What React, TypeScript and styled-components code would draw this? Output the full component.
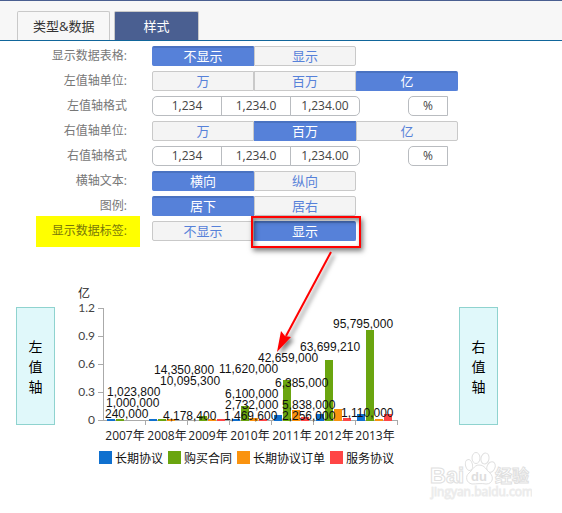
import React, { useState } from "react";
import styled, { createGlobalStyle } from "styled-components";

const sans = `"Open Sans", "Noto Sans CJK SC", sans-serif`;
const cjk = `"Noto Sans CJK SC", sans-serif`;

const GlobalStyle = createGlobalStyle`
  *, *::before, *::after { box-sizing: border-box; }
  body { margin: 0; background: #fff; font-family: ${sans}; }
  button { font-family: inherit; margin: 0; padding: 0; cursor: pointer; white-space: nowrap; }
`;

const Page = styled.div`
  position: relative;
  min-height: 100vh;
  overflow: hidden;
`;

const TabBar = styled.nav`
  display: flex;
  align-items: flex-end;
  gap: 4px;
  height: 41px;
  padding-left: 17px;
  background: #f7f7f7;
  border-top: 1px solid #4a5f91;
  border-bottom: 1px solid #11669b;
`;

const Tab = styled.button<{ $active: boolean }>`
  height: 29px;
  padding: 0 ${(p) => (p.$active ? 28 : 15)}px;
  border: 1px solid #c9c9c9;
  border-bottom: 0;
  border-radius: 2px 2px 0 0;
  background: ${(p) => (p.$active ? "#4a5f91" : "#f7f7f7")};
  color: ${(p) => (p.$active ? "#fff" : "#333")};
  font-size: 13px;
  line-height: 28px;
`;

const Form = styled.div`
  display: flex;
  flex-direction: column;
  gap: 5px;
  padding-top: 5px;
`;

const Row = styled.div`
  display: flex;
  align-items: center;
  gap: 25px;
  height: 20px;
`;

const Label = styled.span<{ $marked?: boolean }>`
  position: relative;
  z-index: 0;
  flex: none;
  width: 127px;
  text-align: right;
  color: ${(p) => (p.$marked ? "#77770a" : "#777")};
  font-family: ${sans};
  font-size: 12px;
  line-height: 20px;

  &::before {
    content: "";
    display: ${(p) => (p.$marked ? "block" : "none")};
    position: absolute;
    z-index: -1;
    inset: -5px -13px -6px 36px;
    background: #ff0;
  }
`;

const Group = styled.div`
  display: flex;
`;

const Segment = styled.button<{ $active: boolean }>`
  width: 102px;
  height: 20px;
  border: 1px solid ${(p) => (p.$active ? "#5681d9" : "#c9c9c9")};
  border-top-color: ${(p) => (p.$active ? "#4a72c0" : "#c9c9c9")};
  box-shadow: ${(p) => (p.$active ? "inset 0 1px 0 #4a72c0" : "none")};
  background: ${(p) => (p.$active ? "#5681d9" : "#f4f4f4")};
  color: ${(p) => (p.$active ? "#fff" : "#5681d9")};
  font-size: 13px;
  line-height: 16px;

  &:first-child { border-radius: 2px 0 0 2px; }
  &:last-of-type { border-radius: 0 2px 2px 0; }
`;

const FormatGroup = styled.div`
  display: flex;
  gap: 48px;
`;

const FormatButton = styled.button`
  width: 70px;
  height: 20px;
  border: 1px solid #b9bcc0;
  background: #fff;
  color: #444;
  font-size: 12px;
  line-height: 18px;

  & + & { margin-left: -1px; }
  &:first-child { border-radius: 5px 0 0 5px; }
  &:last-child { border-radius: 0 5px 5px 0; }
`;

const PercentButton = styled(FormatButton)`
  width: 40px;
  &:first-child, &:last-child { border-radius: 5px 0 0 5px; }
`;

const Callout = styled.div`
  position: relative;
  display: flex;
`;

const CalloutBox = styled.div`
  position: absolute;
  inset: -5px -5px -7px 99px;
  border: 2px solid #f00;
  box-shadow: 2px 3px 5px rgba(0, 0, 0, 0.5), inset 2px 3px 5px rgba(0, 0, 0, 0.45);
  pointer-events: none;
`;

const CalloutArrow = styled.svg`
  position: absolute;
  left: 118px;
  top: 27px;
  z-index: 2;
  pointer-events: none;
`;

const ChartArea = styled.section`
  display: flex;
  align-items: flex-start;
  margin-top: 40px;
  padding-left: 16px;
`;

const AxisCard = styled.div`
  display: flex;
  flex-direction: column;
  align-items: center;
  justify-content: center;
  flex: none;
  width: 39px;
  height: 118px;
  margin-top: 26px;
  border: 1px solid #8fd3cf;
  background: #e0f8fa;
  color: #000;
  font-family: ${cjk};
  font-size: 14px;
  line-height: 20px;
`;

const Figure = styled.figure`
  flex: none;
  margin: 0;
`;

const Plot = styled.svg`
  display: block;
`;

const AxisText = styled.text`
  font-family: Lato, sans-serif;
  font-size: 12px;
  fill: #444;
`;

const YearText = styled.text`
  font-family: ${sans};
  font-size: 12px;
  fill: #222;
`;

const ValueText = styled.text`
  font-family: "Liberation Sans", sans-serif;
  font-size: 12px;
  fill: #111;
`;

const Legend = styled.figcaption`
  display: flex;
  gap: 5px;
  margin-top: 6px;
  padding-left: 44px;
`;

const LegendItem = styled.span`
  display: flex;
  align-items: center;
  gap: 3px;
  height: 13px;
  color: #111;
  font-family: ${cjk};
  font-size: 12px;
  line-height: 13px;
`;

const Swatch = styled.i<{ $color: string }>`
  width: 13px;
  height: 13px;
  background: ${(p) => p.$color};
`;

const Watermark = styled.svg`
  position: absolute;
  right: 30px;
  bottom: 11px;
`;

type Choice = { label: string; options: string[]; initial: number; marked?: boolean };
type FormatRow = { label: string; format: true };

const rows: (Choice | FormatRow)[] = [
  { label: "显示数据表格:", options: ["不显示", "显示"], initial: 0 },
  { label: "左值轴单位:", options: ["万", "百万", "亿"], initial: 2 },
  { label: "左值轴格式", format: true },
  { label: "右值轴单位:", options: ["万", "百万", "亿"], initial: 1 },
  { label: "右值轴格式", format: true },
  { label: "横轴文本:", options: ["横向", "纵向"], initial: 0 },
  { label: "图例:", options: ["居下", "居右"], initial: 0 },
  { label: "显示数据标签:", options: ["不显示", "显示"], initial: 1, marked: true },
];

const colors = ["#0f70cf", "#6aa50f", "#fa930f", "#ff4545"];
const series = ["长期协议", "购买合同", "长期协议订单", "服务协议"];

// Bar heights in pixels, one list per year, in series order.
const years: { year: number; bars: number[] }[] = [
  { year: 2007, bars: [1, 1, 0, 0] },
  { year: 2008, bars: [1, 1, 1, 0] },
  { year: 2009, bars: [0, 4, 1, 1] },
  { year: 2010, bars: [1, 14, 2, 1] },
  { year: 2011, bars: [5, 40, 10, 3] },
  { year: 2012, bars: [6, 60, 11, 2] },
  { year: 2013, bars: [6, 90, 1, 6] },
];

const values: [string, number, number][] = [
  ["1,023,800", 107, 396],
  ["1,000,000", 106, 407],
  ["240,000", 105, 418],
  ["14,350,800", 154, 374],
  ["10,095,300", 160, 385],
  ["4,178,400", 163, 420],
  ["11,620,000", 219, 373],
  ["6,100,000", 225, 398],
  ["2,732,000", 225, 409],
  ["1,469,600", 224, 420],
  ["42,659,000", 258, 362],
  ["6,385,000", 275, 387],
  ["5,838,000", 282, 409],
  ["2,256,000", 282, 420],
  ["63,699,210", 300, 351],
  ["95,795,000", 333, 328],
  ["1,110,000", 341, 417],
];

function ChoiceRow({ label, options, initial, marked }: Choice) {
  const [selected, setSelected] = useState(initial);
  const id = `label-${label}`;
  const segments = options.map((option, i) => (
    <Segment
      key={option}
      type="button"
      $active={i === selected}
      aria-pressed={i === selected}
      onClick={() => setSelected(i)}
    >
      {option}
    </Segment>
  ));
  return (
    <Row>
      <Label id={id} $marked={marked}>{label}</Label>
      {marked ? (
        <Callout role="group" aria-labelledby={id}>
          {segments}
          <CalloutBox />
          <Arrow />
        </Callout>
      ) : (
        <Group role="group" aria-labelledby={id}>{segments}</Group>
      )}
    </Row>
  );
}

function FormatChoice({ label }: { label: string }) {
  const id = `label-${label}`;
  return (
    <Row>
      <Label id={id}>{label}</Label>
      <FormatGroup role="group" aria-labelledby={id}>
        <Group>
          <FormatButton type="button">1,234</FormatButton>
          <FormatButton type="button">1,234.0</FormatButton>
          <FormatButton type="button">1,234.00</FormatButton>
        </Group>
        <Group>
          <PercentButton type="button">%</PercentButton>
        </Group>
      </FormatGroup>
    </Row>
  );
}

function Arrow() {
  return (
    <CalloutArrow width="80" height="112" viewBox="270 248 80 112" aria-hidden="true">
      <defs>
        <filter id="soft" x="-30%" y="-30%" width="170%" height="170%">
          <feDropShadow dx="3" dy="3" stdDeviation="2" floodColor="#000" floodOpacity="0.5" />
        </filter>
      </defs>
      <g filter="url(#soft)">
        <path d="M331 252 L286 336" stroke="#f00" strokeWidth="2" />
        <path d="M277 352 L281 331 L285 336 L291 337 Z" fill="#f00" />
      </g>
    </CalloutArrow>
  );
}

function Chart() {
  return (
    <Figure>
      <Plot width="404" height="164" viewBox="55 281 404 164" role="img" aria-label="2007年至2013年">
        <YearText x="78" y="298">亿</YearText>
        {["1.2", "0.9", "0.6", "0.3", "0"].map((tick, i) => (
          <g key={tick}>
            <AxisText x="95" y={312 + i * 28} textAnchor="end">{tick}</AxisText>
            <rect x="98" y={308 + i * 28} width="5" height="1" fill="#aaa" />
          </g>
        ))}
        <rect x="103" y="308" width="1" height="113" fill="#aaa" />
        <rect x="103" y="420" width="294" height="1" fill="#aaa" />
        {years.map(({ year, bars }, i) => (
          <g key={year}>
            <rect x={Math.round(145.3 + i * 41.9)} y="420" width="1" height="5" fill="#aaa" />
            {bars.map((h, s) => (
              <rect key={s} x={107 + Math.round(i * 41.7) + s * 9} y={420 - h} width="8" height={h ? h + 1 : 0} fill={colors[s]} />
            ))}
            <YearText x={125 + Math.round(i * 41.7)} y="440" textAnchor="middle">{`${year}年`}</YearText>
          </g>
        ))}
        {values.map(([text, x, y]) => (
          <ValueText key={text} x={x} y={y}>{text}</ValueText>
        ))}
      </Plot>
      <Legend>
        {series.map((name, i) => (
          <LegendItem key={name}>
            <Swatch $color={colors[i]} />
            {name}
          </LegendItem>
        ))}
      </Legend>
    </Figure>
  );
}

function BaiduMark() {
  return (
    <Watermark width="104" height="52" viewBox="428 450 104 52" aria-label="Baidu 经验">
      <g fill="#fff" stroke="#e0e0e0" strokeWidth="1">
        <text x="430" y="483" fontFamily="Liberation Sans, sans-serif" fontWeight="700" fontSize="22">Bai</text>
        <ellipse cx="469" cy="465" rx="3.5" ry="5.5" transform="rotate(-14 469 465)" />
        <ellipse cx="476" cy="458" rx="4" ry="5.5" />
        <ellipse cx="485" cy="458.5" rx="4" ry="5.5" transform="rotate(12 485 458.5)" />
        <ellipse cx="491" cy="467" rx="4" ry="5.5" transform="rotate(24 491 467)" />
        <path d="M479 465 C474 465 472 471 469 473 C465 476 466 483 472 484 C476 484 482 483 486 484 C493 484 494 477 490 473 C486 470 485 465 479 465 Z" />
        <text x="495" y="482" fontFamily="Noto Sans CJK SC, sans-serif" fontWeight="700" fontSize="17">经验</text>
      </g>
      <text x="471" y="481" fill="#dedede" fontFamily="Liberation Sans, sans-serif" fontWeight="700" fontSize="13">du</text>
      <text x="431" y="496" fill="#fff" stroke="#ececec" strokeWidth="1" fontFamily="Open Sans, sans-serif" fontSize="12">jingyan.baidu.com</text>
    </Watermark>
  );
}

export default function App() {
  const [tab, setTab] = useState(1);
  return (
    <Page>
      <GlobalStyle />
      <TabBar>
        {["类型&数据", "样式"].map((name, i) => (
          <Tab key={name} type="button" $active={tab === i} aria-pressed={tab === i} onClick={() => setTab(i)}>
            {name}
          </Tab>
        ))}
      </TabBar>
      <Form>
        {rows.map((row) =>
          "format" in row ? <FormatChoice key={row.label} label={row.label} /> : <ChoiceRow key={row.label} {...row} />
        )}
      </Form>
      <ChartArea>
        <AxisCard>
          <span>左</span>
          <span>值</span>
          <span>轴</span>
        </AxisCard>
        <Chart />
        <AxisCard>
          <span>右</span>
          <span>值</span>
          <span>轴</span>
        </AxisCard>
      </ChartArea>
      <BaiduMark />
    </Page>
  );
}
